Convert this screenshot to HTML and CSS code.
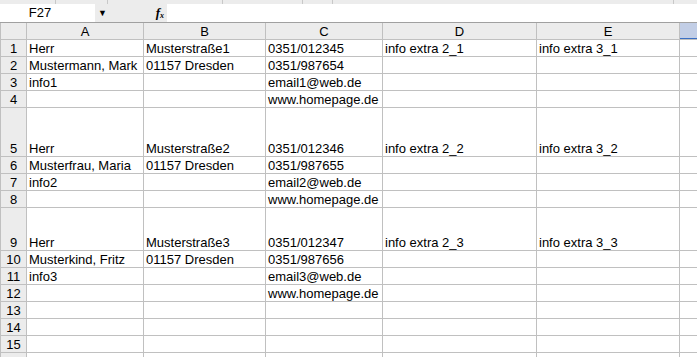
FILE: index.html
```html
<!DOCTYPE html>
<html lang="de">
<head>
    <meta charset="UTF-8">
    <title>Tabelle</title>
    <link rel="stylesheet" href="styles.css">
</head>
<body>
    <div class="strip">
        <span class="seg w55"></span>
        <span class="seg w52"></span>
        <span class="seg w115"></span>
        <span class="seg w80"></span>
        <span class="seg w30"></span>
        <span class="seg w341"></span>
    </div>

    <div class="formula-bar">
        <div class="namebox">F27</div>
        <div class="fbuttons">
            <span class="arrow">&#9660;</span>
            <span class="fx">f<sub>x</sub></span>
        </div>
        <div class="finput"></div>
    </div>

    <div class="sheet">
        <div class="corner"></div>
        <div class="ch">A</div><div class="ch">B</div><div class="ch">C</div><div class="ch">D</div><div class="ch">E</div><div class="ch sel"></div>

        <div class="rh">1</div><div class="c">Herr</div><div class="c">Musterstraße1</div><div class="c">0351/012345</div><div class="c">info extra 2_1</div><div class="c">info extra 3_1</div><div class="c"></div>
        <div class="rh">2</div><div class="c">Mustermann, Mark</div><div class="c">01157 Dresden</div><div class="c">0351/987654</div><div class="c"></div><div class="c"></div><div class="c"></div>
        <div class="rh">3</div><div class="c">info1</div><div class="c"></div><div class="c">email1@web.de</div><div class="c"></div><div class="c"></div><div class="c"></div>
        <div class="rh">4</div><div class="c"></div><div class="c"></div><div class="c">www.homepage.de</div><div class="c"></div><div class="c"></div><div class="c"></div>

        <div class="rh">5</div><div class="c">Herr</div><div class="c">Musterstraße2</div><div class="c">0351/012346</div><div class="c">info extra 2_2</div><div class="c">info extra 3_2</div><div class="c"></div>
        <div class="rh">6</div><div class="c">Musterfrau, Maria</div><div class="c">01157 Dresden</div><div class="c">0351/987655</div><div class="c"></div><div class="c"></div><div class="c"></div>
        <div class="rh">7</div><div class="c">info2</div><div class="c"></div><div class="c">email2@web.de</div><div class="c"></div><div class="c"></div><div class="c"></div>
        <div class="rh">8</div><div class="c"></div><div class="c"></div><div class="c">www.homepage.de</div><div class="c"></div><div class="c"></div><div class="c"></div>

        <div class="rh">9</div><div class="c">Herr</div><div class="c">Musterstraße3</div><div class="c">0351/012347</div><div class="c">info extra 2_3</div><div class="c">info extra 3_3</div><div class="c"></div>
        <div class="rh">10</div><div class="c">Musterkind, Fritz</div><div class="c">01157 Dresden</div><div class="c">0351/987656</div><div class="c"></div><div class="c"></div><div class="c"></div>
        <div class="rh">11</div><div class="c">info3</div><div class="c"></div><div class="c">email3@web.de</div><div class="c"></div><div class="c"></div><div class="c"></div>
        <div class="rh">12</div><div class="c"></div><div class="c"></div><div class="c">www.homepage.de</div><div class="c"></div><div class="c"></div><div class="c"></div>

        <div class="rh">13</div><div class="c"></div><div class="c"></div><div class="c"></div><div class="c"></div><div class="c"></div><div class="c"></div>
        <div class="rh">14</div><div class="c"></div><div class="c"></div><div class="c"></div><div class="c"></div><div class="c"></div><div class="c"></div>
        <div class="rh">15</div><div class="c"></div><div class="c"></div><div class="c"></div><div class="c"></div><div class="c"></div><div class="c"></div>
        <div class="rh"></div><div class="c"></div><div class="c"></div><div class="c"></div><div class="c"></div><div class="c"></div><div class="c"></div>
    </div>
</body>
</html>
```

FILE: styles.css
```css
html, body {
    margin: 0;
    height: 357px;
    overflow: hidden;
    background: #fff;
    font-family: "Liberation Sans", Arial, sans-serif;
    font-size: 13px;
    color: #000;
}

.strip {
    display: flex;
    height: 4px;
    background: #ececec;
}

.strip .seg {
    border-right: 1px solid #c8c8c8;
    box-sizing: border-box;
}

.w55 { width: 56px; }
.w52 { width: 52px; }
.w115 { width: 115px; }
.w80 { width: 80px; }
.w30 { width: 30px; }
.w341 { width: 341px; }

.formula-bar {
    display: flex;
    height: 18px;
}

.namebox {
    width: 80px;
    padding-right: 15px;
    background: #fff;
    text-align: center;
    line-height: 18px;
}

.fbuttons {
    width: 72px;
    background: #ececec;
    display: flex;
    align-items: center;
    justify-content: space-between;
    padding: 0 3px 0 2px;
    box-sizing: border-box;
}

.arrow {
    font-size: 9px;
    color: #000;
    margin-left: 1px;
}

.fx {
    font-family: "Liberation Serif", serif;
    font-style: italic;
    font-weight: bold;
    font-size: 13px;
}

.fx sub {
    font-size: 8px;
    vertical-align: -1px;
}

.finput {
    flex: 1;
    background: #fff;
}

.sheet {
    display: grid;
    grid-template-columns: 25px 116px 121px 116px 153px 142px 1fr;
    grid-template-rows: 16px 16px 16px 16px 16px 48px 16px 16px 16px 42px repeat(7, 16px);
    gap: 1px;
    padding-left: 1px;
    background: #c0c0c0;
    border-top: 1px solid #a0a0a0;
}

.corner,
.ch,
.rh {
    background: #ececec;
}

.ch {
    display: flex;
    align-items: center;
    justify-content: center;
}

.ch.sel {
    background: #c2cee6;
    box-shadow: inset 0 -1px 0 #3a6fc4;
}

.rh {
    display: flex;
    align-items: flex-end;
    justify-content: center;
    line-height: 15px;
}

.c {
    background: #fff;
    display: flex;
    align-items: flex-end;
    padding: 0 2px;
    white-space: nowrap;
    overflow: hidden;
    line-height: 15px;
}
```
